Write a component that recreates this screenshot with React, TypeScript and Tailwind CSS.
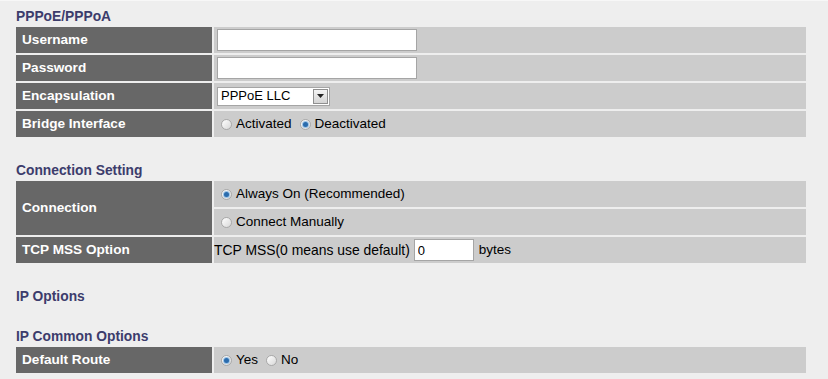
import { ReactNode } from 'react'

function Radio({ checked, label }: { checked?: boolean; label: string }) {
  return (
    <span className="inline-flex items-center mr-[8px]">
      <span className="mr-[4px] flex h-[11px] w-[11px] items-center justify-center rounded-full border border-[#a9a9a9] bg-gradient-to-br from-white to-[#d8d8d8]">
        {checked && (
          <span className="h-[5px] w-[5px] rounded-full bg-[#2b6cad] shadow-[0_0_0_1px_#9cc3e6]" />
        )}
      </span>
      {label}
    </span>
  )
}

function Heading({ children, className }: { children: ReactNode; className: string }) {
  return (
    <div className={`flex items-end text-[13.8px] font-bold leading-[16px] text-[#3c3c6c] ${className}`}>
      {children}
    </div>
  )
}

function Label({ children, className = '' }: { children: ReactNode; className?: string }) {
  return (
    <div className={`flex items-center bg-[#676767] pl-[6px] text-[13.6px] font-bold text-white ${className}`}>
      {children}
    </div>
  )
}

function Value({ children, className = '' }: { children?: ReactNode; className?: string }) {
  return <div className={`flex items-center bg-[#cccccc] text-[13.5px] text-black ${className}`}>{children}</div>
}

export default function App() {
  return (
    <div className="min-h-[379px] w-[828px] border-t border-[#f7f7f7] bg-[#eeeeee] pl-4 pr-[22px] font-['Liberation_Sans',Arial,sans-serif]">
      <Heading className="h-[26px] pb-[2px]">PPPoE/PPPoA</Heading>
      <div className="grid grid-cols-[196px_1fr] auto-rows-[26px] gap-[2px]">
        <Label>Username</Label>
        <Value className="pl-[3px]">
          <input className="h-[22px] w-[200px] border border-[#a5a5a5] bg-white px-[3px] outline-none" />
        </Value>
        <Label>Password</Label>
        <Value className="pl-[3px]">
          <input type="password" className="h-[22px] w-[200px] border border-[#a5a5a5] bg-white px-[3px] outline-none" />
        </Value>
        <Label>Encapsulation</Label>
        <Value className="pl-[3px]">
          <div className="flex h-[19px] w-[113px] items-center justify-between border border-[#a5a5a5] bg-white pl-[3px] pr-[1px] text-[13px]">
            <span>PPPoE LLC</span>
            <span className="flex h-[15px] w-[15px] items-center justify-center border border-[#8f8f8f] bg-gradient-to-b from-[#f4f4f4] to-[#d4d4d4]">
              <svg width="7" height="4" viewBox="0 0 7 4">
                <path d="M0 0h7L3.5 4z" fill="#222" />
              </svg>
            </span>
          </div>
        </Value>
        <Label>Bridge Interface</Label>
        <Value className="pl-[7px]">
          <Radio label="Activated" />
          <Radio checked label="Deactivated" />
        </Value>
      </div>

      <Heading className="h-[44px] pb-[2px]">Connection Setting</Heading>
      <div className="grid grid-cols-[196px_1fr] auto-rows-[26px] gap-[2px]">
        <Label className="row-span-2">Connection</Label>
        <Value className="pl-[7px]">
          <Radio checked label="Always On (Recommended)" />
        </Value>
        <Value className="pl-[7px]">
          <Radio label="Connect Manually" />
        </Value>
        <Label>TCP MSS Option</Label>
        <Value>
          <span className="mr-[4px] text-[13.9px]">TCP MSS(0 means use default)</span>
          <input
            defaultValue="0"
            className="h-[22px] w-[60px] border border-[#a5a5a5] bg-white px-[3px] text-[13px] outline-none"
          />
          <span className="ml-[5px]">bytes</span>
        </Value>
      </div>

      <Heading className="h-[42px]">IP Options</Heading>
      <Heading className="h-[42px] pb-[2px]">IP Common Options</Heading>
      <div className="grid grid-cols-[196px_1fr] auto-rows-[26px] gap-[2px]">
        <Label>Default Route</Label>
        <Value className="pl-[7px]">
          <Radio checked label="Yes" />
          <Radio label="No" />
        </Value>
      </div>
    </div>
  )
}
